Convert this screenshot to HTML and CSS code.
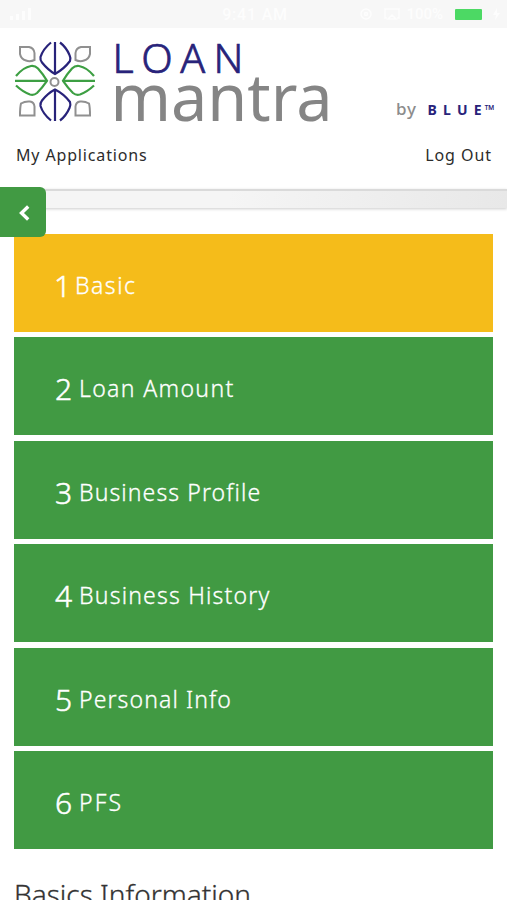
FILE: index.html
```html
<!DOCTYPE html>
<html lang="en">
<head>
<meta charset="utf-8">
<title>Loan Mantra</title>
<link rel="stylesheet" href="styles.css">
</head>
<body>
<div class="status">
  <svg class="signal" width="22" height="14" viewBox="0 0 22 14" fill="currentColor"><path d="M0 9h3v4H0zM6 7h3v6H6zM12 4h3v9h-3zM18 1h3v12h-3z"/></svg>
  <span class="time">9:41 AM</span>
  <div class="device">
    <svg width="44" height="14" viewBox="0 0 44 14" fill="none" stroke="currentColor" stroke-width="1.5"><circle cx="8" cy="7" r="5"/><circle cx="8" cy="7" r="1.5"/><path d="M29 11h-2V2h14v9h-2M34 8l4 4h-8z"/></svg>
    <span class="percent">100%</span>
    <span class="battery"></span>
    <svg width="7" height="12" viewBox="0 0 7 12" fill="currentColor"><path d="M4 0 0 7h3l-1 5 5-7H4z"/></svg>
  </div>
</div>
<header class="header">
  <svg class="logo" width="479" height="88" viewBox="14 38 479 88">
    <g fill="none" stroke-width="2.2">
      <g stroke="#28237a">
        <path d="M55 42v31M51 42.500Q43 49 40.500 57Q40 60 42 62.500Q48 70 55 74Q64 69 70 61Q71 58 69.500 55Q66 47 60 42.500"/>
        <path d="M55 121V90M51 120.500Q43 114 40.500 106Q40 103 42 100.500Q48 93 55 89.500Q64 94 70 102Q71 105 69.500 108Q66 116 60 120.500"/>
      </g>
      <g stroke="#3d9f43">
        <path d="M15 80.800h31M16 76Q23 67.500 31 66Q35 65.500 38 68.500Q43 74 47 80.800Q42 88 37 93Q34 95.500 30 94.500Q23 92 16 85.500"/>
        <path d="M95 80.800H64M94 76Q87 67.500 79 66Q75 65.500 72 68.500Q67 74 63 80.800Q68 88 73 93Q76 95.500 80 94.500Q87 92 94 85.500"/>
      </g>
      <g stroke="#909090" stroke-width="2">
        <circle cx="54.500" cy="82" r="4"/>
        <path d="M20 47h9Q34 48 34.500 53v7Q30 62 26 60.500Q21 59 20 54z"/>
        <path d="M90 47h-9Q76 48 75.500 53v7Q80 62 84 60.500Q89 59 90 54z"/>
        <path d="M20 115.500h14.500v-9Q34 102 30 101.500Q25 101 21 103.500Q20 107 20 115.500z"/>
        <path d="M90 115.500H75.500v-9Q76 102 80 101.500Q85 101 89 103.500Q90 107 90 115.500z"/>
      </g>
    </g>
    <text class="loan" x="112.500" y="72.500" textLength="131" lengthAdjust="spacing">LOAN</text>
    <text class="mantra" x="110.500" y="121" textLength="222" lengthAdjust="spacingAndGlyphs">mantra</text>
    <text class="by" x="396" y="115" textLength="20">by</text>
    <text class="blue" x="427.500" y="114.500" textLength="54">BLUE</text>
    <text class="tm" x="484.500" y="114.500" textLength="10" lengthAdjust="spacingAndGlyphs">™</text>
  </svg>
  <nav class="nav"><a class="apps">My Applications</a><a class="out">Log Out</a></nav>
</header>
<div class="band">
  <button class="back" aria-label="Back"><svg width="12" height="16" viewBox="0 0 12 16" fill="none" stroke="#fff" stroke-width="3.400"><path d="M10.200 1.500 3.500 8l6.700 6.500"/></svg></button>
</div>
<main class="content">
  <ol class="steps">
    <li class="step active"><span class="num">1</span><span class="label basic">Basic</span></li>
    <li class="step"><span class="num">2</span><span class="label amount">Loan Amount</span></li>
    <li class="step"><span class="num">3</span><span class="label profile">Business Profile</span></li>
    <li class="step"><span class="num">4</span><span class="label history">Business History</span></li>
    <li class="step"><span class="num">5</span><span class="label personal">Personal Info</span></li>
    <li class="step"><span class="num">6</span><span class="label pfs">PFS</span></li>
  </ol>
  <h1 class="title">Basics Information</h1>
</main>
</body>
</html>
```

FILE: styles.css
```css
* { box-sizing: border-box; }
body { margin: 0; height: 900px; overflow: hidden; background: #fff; color: #333; font-family: "Noto Sans", sans-serif; }
.status { height: 28px; background: #f7f7f7; color: #fdfdfd; display: grid; grid-template-columns: 1fr auto 1fr; align-items: center; padding: 0 7px 0 10px; font-family: Roboto, sans-serif; font-size: 16px; font-weight: 500; }
.time { letter-spacing: 0.8px; }
.device { display: flex; align-items: center; justify-content: flex-end; gap: 4px; }
.percent { font-size: 15px; margin-right: 8px; }
.battery { width: 27px; height: 11px; background: #4cd964; border-radius: 1px; margin-right: 7px; }
.header { height: 161px; padding: 10px 14px 0; }
.logo { display: block; overflow: visible; }
.loan { font: 300 41px "Noto Sans", sans-serif; fill: #28237a; stroke: #28237a; stroke-width: 0.7px; }
.mantra { font: 400 65px "Noto Sans", sans-serif; fill: #858585; }
.by { font: 500 17px "Noto Sans", sans-serif; fill: #8c8c8c; }
.blue { font: 700 14px "Noto Sans", sans-serif; fill: #28237a; }
.tm { font: 600 14px "Noto Sans", sans-serif; fill: #28237a; }
.nav { display: flex; justify-content: space-between; padding: 16px 1px 0 2px; font-size: 16px; line-height: 26px; color: #2c2c2c; }
.apps { letter-spacing: 0.85px; }
.out { letter-spacing: 0.95px; }
.band { height: 19px; border-top: 2px solid #dadada; background: linear-gradient(90deg, #f5f5f5 45%, #e8e8e8); box-shadow: 0 1px 3px #ccc; position: relative; }
.back { position: absolute; left: 0; top: -4px; width: 45.500px; height: 50px; border: 0; border-radius: 0 6px 6px 0; background: #419a43; padding: 2px 0 0 2px; display: grid; place-items: center; }
.content { padding: 25.500px 14px 0; }
.steps { list-style: none; margin: 0; padding: 0; display: grid; gap: 5.600px; }
.step { height: 98px; background: #419a43; color: #fff; display: flex; align-items: baseline; padding: 31px 0 0 41px; line-height: 42px; }
.active { background: #f5bc1a; }
.num { font-size: 30px; font-weight: 300; width: 24px; -webkit-text-stroke: 0.5px #fff; }
.active .num { width: 20px; margin-left: -1px; margin-right: 1px; }
.label { font-size: 23px; font-weight: 300; letter-spacing: 1.1px; position: relative; top: -3px; white-space: nowrap; -webkit-text-stroke: 0.3px #fff; }
.basic { letter-spacing: 1.5px; }
.amount { letter-spacing: 1.35px; }
.history { letter-spacing: 1.2px; }
.pfs { letter-spacing: 2.2px; }
.title { margin: 26px 0 0; font-size: 28px; line-height: 38px; font-weight: 300; white-space: nowrap; -webkit-text-stroke: 0.3px #333; }
```
